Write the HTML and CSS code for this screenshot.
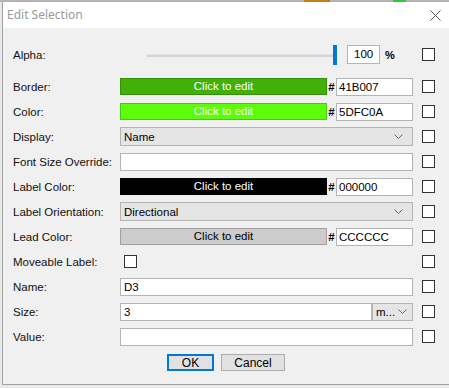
FILE: index.html
```html
<!DOCTYPE html>
<html lang="en">
<head>
  <meta charset="UTF-8">
  <title>Edit Selection</title>
  <link rel="stylesheet" href="styles.css">
</head>
<body>
  <div class="topstrip">
    <span class="mark orange"></span>
    <span class="mark green"></span>
  </div>

  <div class="window">
    <div class="titlebar">
      <span class="title">Edit Selection</span>
      <svg class="close" width="11" height="11" viewBox="0 0 11 11">
        <path d="M0.5 0.5 L10.5 10.5 M10.5 0.5 L0.5 10.5" stroke="#555" stroke-width="1" fill="none"/>
      </svg>
    </div>

    <div class="content">
      <!-- alpha slider -->
      <div class="row alpha">
        <label>Alpha:</label>
        <div class="ctl">
          <div class="slider">
            <div class="track"></div>
            <div class="thumb"></div>
          </div>
          <div class="field small">100</div>
          <span class="pct">%</span>
        </div>
        <span class="check"></span>
      </div>

      <div class="row">
        <label>Border:</label>
        <div class="ctl">
          <div class="swatch border-swatch">Click to edit</div>
          <span class="hash">#</span>
          <div class="field hex">41B007</div>
        </div>
        <span class="check"></span>
      </div>

      <div class="row">
        <label>Color:</label>
        <div class="ctl">
          <div class="swatch color-swatch">Click to edit</div>
          <span class="hash">#</span>
          <div class="field hex">5DFC0A</div>
        </div>
        <span class="check"></span>
      </div>

      <div class="row">
        <label>Display:</label>
        <div class="ctl">
          <div class="select">
            <span>Name</span>
            <svg class="chev" width="9" height="5" viewBox="0 0 9 5"><path d="M0.5 0.5 L4.5 4.5 L8.5 0.5" stroke="#666" fill="none"/></svg>
          </div>
        </div>
        <span class="check"></span>
      </div>

      <div class="row">
        <label>Font Size Override:</label>
        <div class="ctl"><div class="field wide"></div></div>
        <span class="check"></span>
      </div>

      <div class="row">
        <label>Label Color:</label>
        <div class="ctl">
          <div class="swatch label-swatch">Click to edit</div>
          <span class="hash">#</span>
          <div class="field hex">000000</div>
        </div>
        <span class="check"></span>
      </div>

      <div class="row">
        <label>Label Orientation:</label>
        <div class="ctl">
          <div class="select">
            <span>Directional</span>
            <svg class="chev" width="9" height="5" viewBox="0 0 9 5"><path d="M0.5 0.5 L4.5 4.5 L8.5 0.5" stroke="#666" fill="none"/></svg>
          </div>
        </div>
        <span class="check"></span>
      </div>

      <div class="row">
        <label>Lead Color:</label>
        <div class="ctl">
          <div class="swatch lead-swatch">Click to edit</div>
          <span class="hash">#</span>
          <div class="field hex">CCCCCC</div>
        </div>
        <span class="check"></span>
      </div>

      <div class="row">
        <label>Moveable Label:</label>
        <div class="ctl"><span class="check inner"></span></div>
        <span class="check"></span>
      </div>

      <div class="row">
        <label>Name:</label>
        <div class="ctl"><div class="field wide">D3</div></div>
        <span class="check"></span>
      </div>

      <div class="row">
        <label>Size:</label>
        <div class="ctl">
          <div class="field wide">3</div>
          <div class="select unit">
            <span>m...</span>
            <svg class="chev" width="9" height="5" viewBox="0 0 9 5"><path d="M0.5 0.5 L4.5 4.5 L8.5 0.5" stroke="#666" fill="none"/></svg>
          </div>
        </div>
        <span class="check"></span>
      </div>

      <div class="row">
        <label>Value:</label>
        <div class="ctl"><div class="field wide"></div></div>
        <span class="check"></span>
      </div>

      <div class="buttons">
        <button class="btn ok">OK</button>
        <button class="btn">Cancel</button>
      </div>
    </div>
  </div>
</body>
</html>
```

FILE: styles.css
```css
body {
  margin: 0;
  padding: 0;
  background-color: #e9e9e9;
  font-family: 'Liberation Sans', Arial, sans-serif;
  font-size: 11.5px;
  color: #000;
  overflow: hidden;
}

.topstrip {
  height: 2px;
  background-color: #b4b4b4;
  display: flex;
}

.mark {
  height: 2px;
}

.mark.orange {
  margin-left: 304px;
  width: 26px;
  background-color: #c47f12;
}

.mark.green {
  margin-left: 63px;
  width: 13px;
  background-color: #39c23a;
}

.window {
  margin-left: 2px;
  border-left: 1px solid #a0a0a0;
  border-bottom: 1px solid #a0a0a0;
  background-color: #f0f0f0;
}

.titlebar {
  height: 26px;
  background-color: #fff;
  display: flex;
  align-items: center;
  justify-content: space-between;
  padding: 0 8px 0 4px;
}

.title {
  font-family: 'Noto Sans', 'Open Sans', sans-serif;
  font-size: 12px;
  color: #9a9a9a;
  margin-top: -1px;
}

.content {
  padding: 14px 0 13px 10px;
}

.row {
  display: grid;
  grid-template-columns: 107px 293px 22px;
  height: 25px;
  align-items: center;
}

.row.alpha {
  margin-bottom: 7px;
}

label {
  white-space: nowrap;
  color: #111;
}

.ctl {
  display: flex;
  align-items: center;
  height: 25px;
}

.check {
  display: block;
  width: 11px;
  height: 11px;
  border: 1px solid #333;
  background-color: #fff;
  justify-self: end;
}

.check.inner {
  margin-left: 4px;
}

/* slider */
.slider {
  position: relative;
  margin-left: 27px;
  width: 190px;
  height: 20px;
}

.track {
  margin-top: 9px;
  height: 2px;
  background-color: #d4d4d4;
  border-top: 1px solid #e4e4e4;
}

.thumb {
  position: absolute;
  right: 0;
  top: 0;
  width: 4px;
  height: 20px;
  background-color: #0078d7;
}

.field {
  box-sizing: border-box;
  height: 18px;
  border: 1px solid #b4b4b4;
  background-color: #fff;
  padding: 0 3px;
  line-height: 16px;
  white-space: nowrap;
}

.field.small {
  width: 33px;
  height: 19px;
  margin-left: 10px;
  padding-left: 6px;
  line-height: 17px;
}

.pct {
  margin-left: 5px;
  font-weight: bold;
  font-size: 11px;
}

.field.wide {
  flex: 1;
}

.field.hex {
  flex: 1;
  padding-left: 2px;
}

.hash {
  width: 9px;
  text-align: center;
  font-weight: bold;
}

.swatch {
  box-sizing: border-box;
  width: 207px;
  height: 17px;
  border: 1px solid;
  color: #fff;
  text-align: center;
  line-height: 15px;
}

.border-swatch {
  background-color: #41b007;
  border-color: #34900a;
}

.color-swatch {
  background-color: #5dfc0a;
  border-color: #4cc80e;
}

.label-swatch {
  background-color: #000;
  border-color: #000;
}

.lead-swatch {
  background-color: #cccccc;
  border-color: #a0a0a0;
  color: #000;
}

.select {
  box-sizing: border-box;
  flex: 1;
  height: 19px;
  border: 1px solid #b4b4b4;
  background-color: #e5e5e5;
  display: flex;
  align-items: center;
  justify-content: space-between;
  padding: 0 9px 0 3px;
}

.select.unit {
  flex: 0 0 41px;
  height: 18px;
  padding: 0 5px 0 3px;
}

.chev {
  display: block;
}

.buttons {
  display: flex;
  justify-content: center;
  gap: 7px;
  margin-top: 5px;
  margin-left: -10px;
}

.btn {
  box-sizing: border-box;
  height: 17px;
  width: 64px;
  padding: 0;
  font-family: 'Liberation Sans', Arial, sans-serif;
  font-size: 12px;
  background-color: #e1e1e1;
  border: 1px solid #adadad;
  color: #000;
}

.btn.ok {
  width: 47px;
  border: 2px solid #0078d7;
}
```
